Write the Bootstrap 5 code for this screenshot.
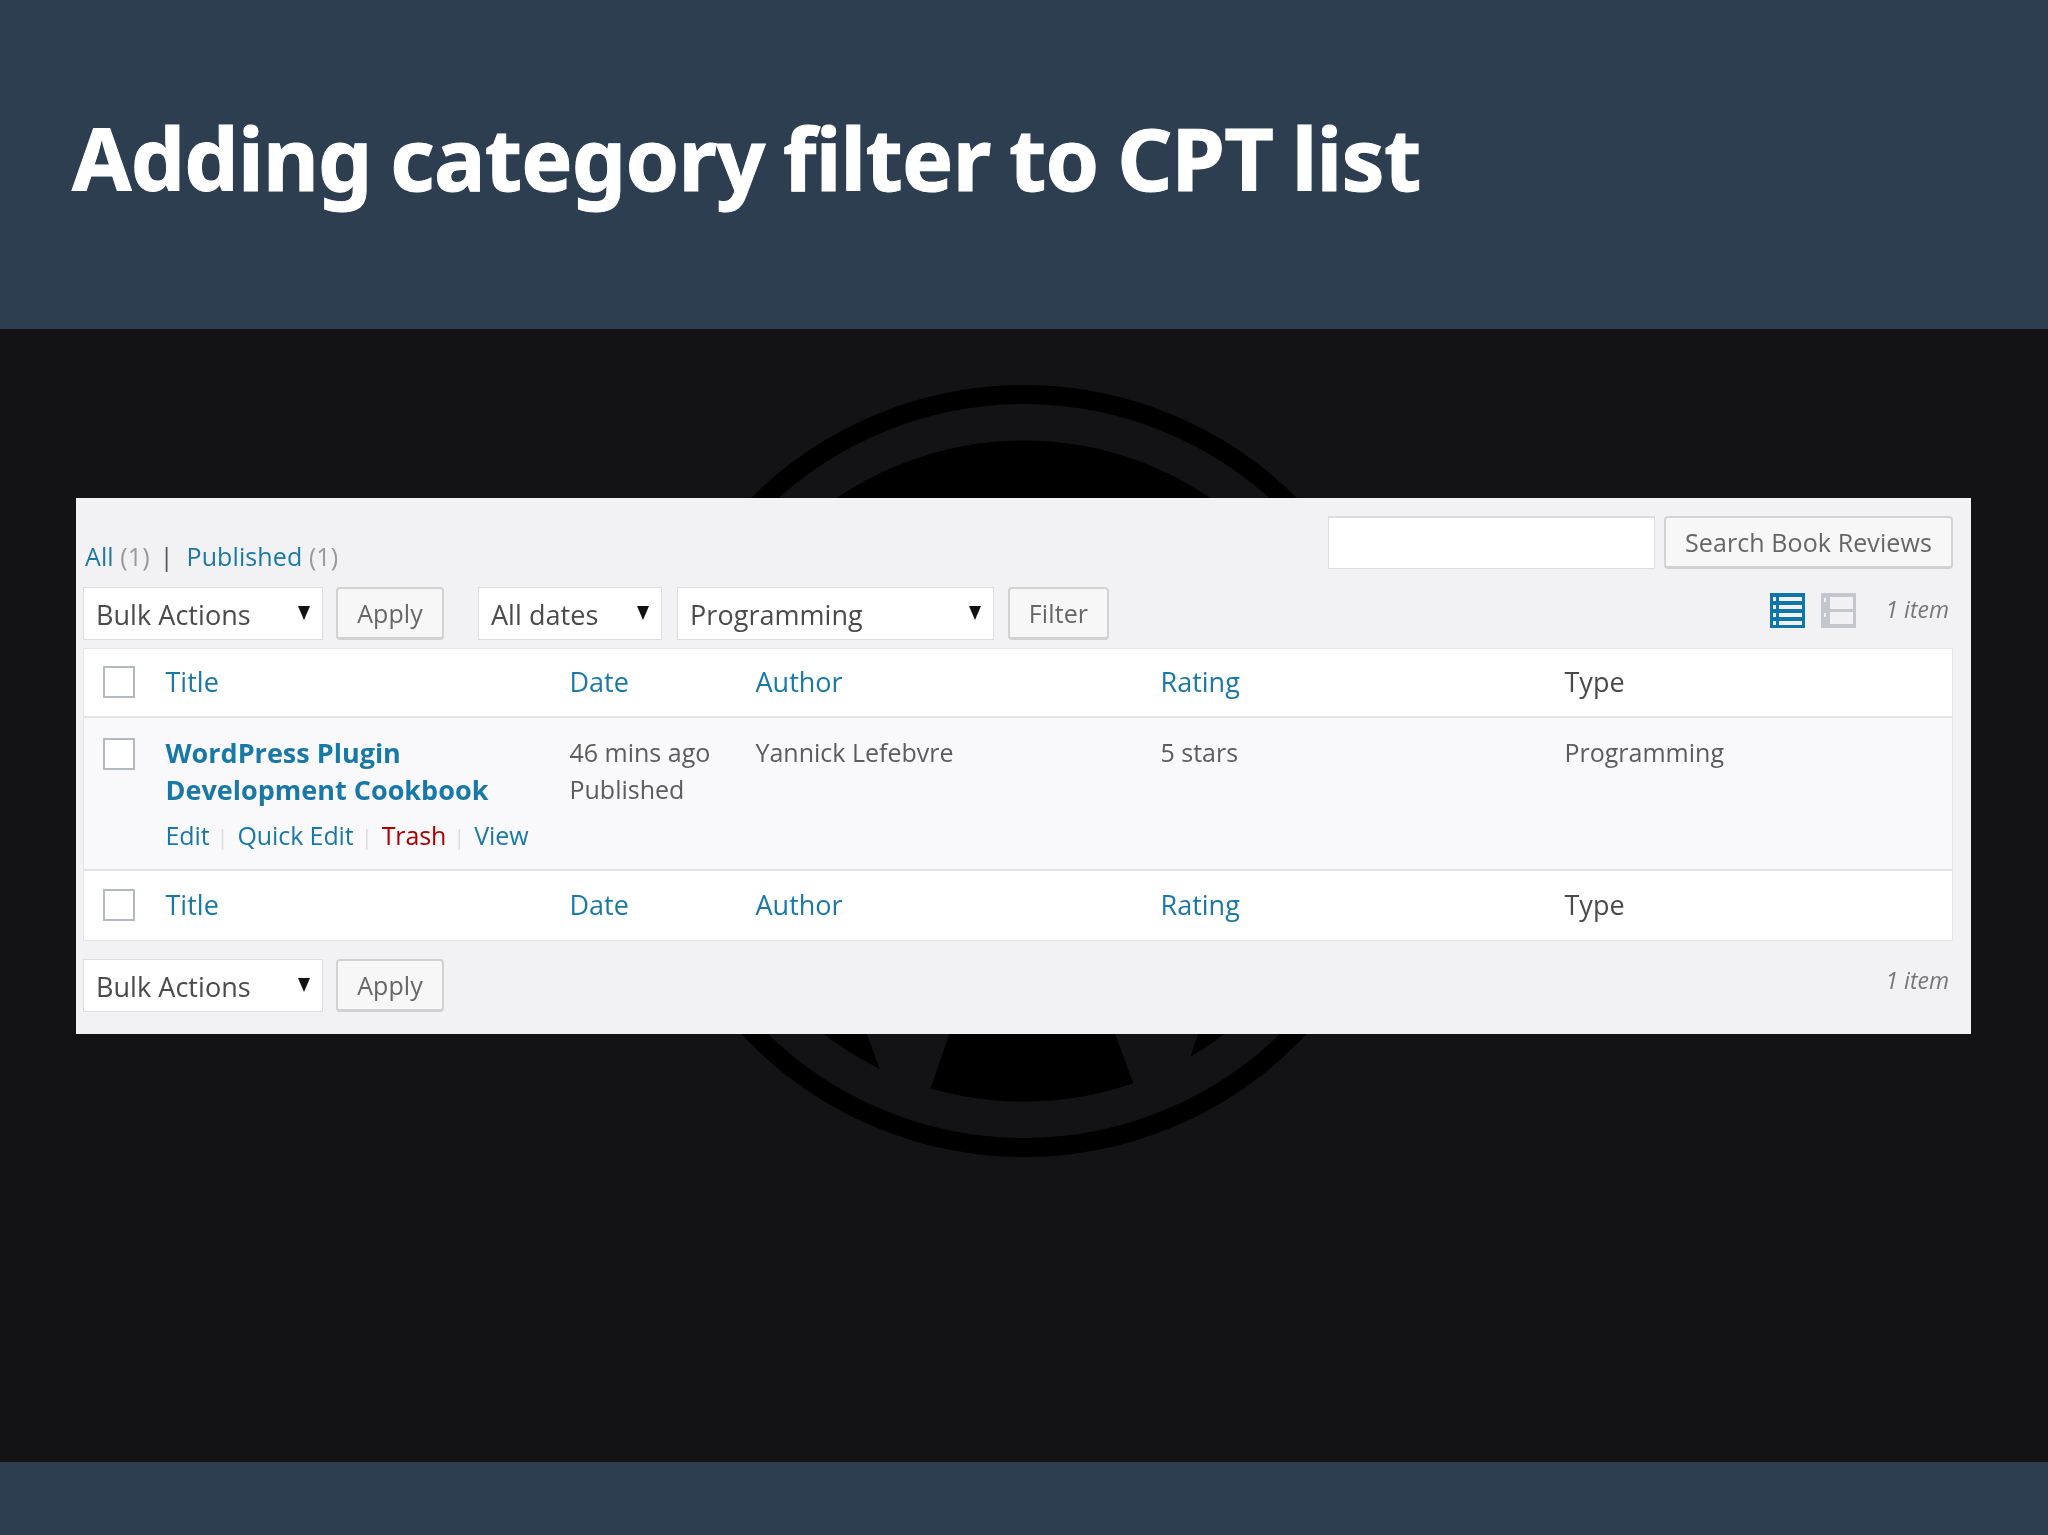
<!DOCTYPE html>
<html lang="en">
<head>
<meta charset="utf-8">
<title>Adding category filter to CPT list</title>
<link href="https://cdn.jsdelivr.net/npm/bootstrap@5.3.0/dist/css/bootstrap.min.css" rel="stylesheet">
<style>
html,body{height:100%;}
body{background:#131316;font-family:"Open Sans","Liberation Sans",sans-serif;color:#555;font-size:26px;}
.slide{height:1535px;overflow:hidden;}
.slide-head{height:329px;background:#2d3e50;padding:0 72px;flex:none;}
.slide-title{font-family:"Noto Sans","Open Sans",sans-serif;font-weight:700;font-size:86px;line-height:1;color:#fff;margin:0;letter-spacing:-.75px;word-spacing:-3px;padding-top:115px;-webkit-text-stroke:1px #fff;}
.slide-body{flex:1 1 auto;padding:169px 77px 0 76px;position:relative;background:#131316;}
.slide-foot{height:73px;background:#2d3e50;flex:none;}
.wp-mark{position:absolute;left:638px;top:56px;width:772px;height:772px;fill:#000;}
.wp-panel{position:relative;background:#f2f1f3;padding:18px 18px 22px 7px;height:536px;filter:blur(.5px);}
.rowline{height:53px;}
.status-links{font-size:25px;line-height:1;margin-left:2px;color:#999;letter-spacing:.1px;}
.status-links a,.wp-link{color:#1a78a6;text-decoration:none;}
.status-links .sep{color:#555;margin:0 13px 0 10px;}
.wp-input{width:327px;height:53px;background:#fff;border:1px solid #ddd;border-top-width:2px;margin-right:9px;border-radius:0;}
.wp-btn{height:53px;background:#f7f7f7;border:2px solid #d2d2d2;border-bottom-width:3px;border-radius:4px;color:#666;font-size:25px;padding:0;line-height:1;letter-spacing:.1px;}
.wp-btn:hover{background:#f7f7f7;color:#666;border-color:#d2d2d2;}
.btn-search{width:289px;}
.btn-apply{width:108px;margin-left:13px;}
.btn-filter{width:101px;margin-left:14px;}
.wp-select{height:53px;border:1px solid #ddd;border-radius:0;background-color:#fff;padding:2px 0 0 12px;font-size:27px;color:#4a4a4a;letter-spacing:.05px;line-height:normal;background-position:right 12px top 18px;background-size:12px 14px;background-image:url("data:image/svg+xml,%3Csvg xmlns='http://www.w3.org/2000/svg' viewBox='0 0 12 14'%3E%3Cpath d='M0 0h12L6 14z' fill='%23111'/%3E%3C/svg%3E");}
.sel-bulk{width:240px;}
.sel-dates{width:184px;margin-left:34px;}
.sel-prog{width:317px;margin-left:15px;}
.toolbar-2{margin-top:18px;height:54px;}
.view-ico{width:35px;height:35px;display:block;}
.view-wrap{margin-top:6px;column-gap:16px;}
.item-count{font-style:italic;font-size:23px;color:#777;margin-left:13px;margin-right:4px;line-height:1;margin-top:5px;}
.item-count-b{margin-top:10px;}
.wp-table{width:1870px;table-layout:fixed;margin:7px 0 0;background:#fff;border-collapse:collapse;border:1px solid #e5e5e5;--bs-table-color:#5c5c5c;--bs-table-bg:transparent;}
.wp-table th,.wp-table td{padding:0;vertical-align:top;font-weight:400;border:0;}
.wp-table thead th,.wp-table tfoot th{font-size:27px;vertical-align:middle;color:#4a4a4a;letter-spacing:0;}
.wp-table thead th{height:68px;padding-bottom:1px;}
.wp-table tfoot th{height:71px;}
.wp-table thead tr{border-bottom:2px solid #e3e3e5;}
.wp-table tfoot tr{border-top:2px solid #e3e3e5;}
.wp-table tbody td{background:#f9f9fb;height:153px;font-size:25px;line-height:37px;padding-top:16px;letter-spacing:0;}
.cb{display:block;width:32px;height:32px;border:2px solid #b4b9be;background:#fff;margin-left:19px;}
.wp-table tbody .cb{margin-top:4px;}
.post-title{font-weight:700;font-size:27px;display:block;width:360px;letter-spacing:0;line-height:37px;}
.row-acts{font-size:25px;margin-top:9px;line-height:37px;white-space:nowrap;letter-spacing:-.1px;}
.row-acts i{font-style:normal;color:#ddd;margin:0 9px 0 7px;font-size:22px;}
.trash{color:#a00;}
.toolbar-3{margin-top:18px;height:53px;}
.toolbar-3 .btn-apply{height:53px;}
</style>
</head>
<body>
<div class="slide d-flex flex-column">
  <header class="slide-head">
    <h1 class="slide-title">Adding category filter to CPT list</h1>
  </header>
  <main class="slide-body">
    <svg class="wp-mark" viewBox="0 0 24 24" aria-hidden="true">
      <path d="M12 0a12 12 0 1 0 0 24a12 12 0 1 0 0-24zm0 .59a11.41 11.41 0 1 1 0 22.82a11.41 11.41 0 1 1 0-22.82z" fill-rule="evenodd"/>
      <g transform="translate(12 12) scale(.953) translate(-12 -12)">
      <path d="M21.469 6.825c.84 1.537 1.318 3.3 1.318 5.175 0 3.979-2.156 7.456-5.363 9.325l3.295-9.527c.615-1.54.82-2.771.82-3.864 0-.405-.026-.78-.07-1.11m-7.981.105c.647-.03 1.232-.105 1.232-.105.582-.075.514-.93-.067-.899 0 0-1.755.135-2.88.135-1.064 0-2.85-.15-2.85-.15-.585-.03-.661.855-.075.885 0 0 .54.061 1.125.09l1.68 4.605-2.37 7.08L5.354 6.9c.649-.03 1.234-.1 1.234-.1.585-.075.516-.93-.065-.896 0 0-1.746.138-2.874.138-.2 0-.438-.008-.69-.015C4.911 3.15 8.235 1.215 12 1.215c2.809 0 5.365 1.072 7.286 2.833-.046-.003-.091-.009-.141-.009-1.06 0-1.812.923-1.812 1.914 0 .89.513 1.643 1.06 2.531.411.72.89 1.643.89 2.977 0 .915-.354 1.994-.821 3.479l-1.075 3.585-3.9-11.61.001.014zM12 22.784c-1.059 0-2.081-.153-3.048-.437l3.237-9.406 3.315 9.087c.024.053.05.101.078.149-1.12.393-2.325.609-3.582.609M1.211 12c0-1.564.336-3.05.935-4.39L7.29 21.709C3.694 19.96 1.212 16.271 1.211 12"/>
      </g>
    </svg>
    <section class="wp-panel">
      <div class="rowline d-flex justify-content-between align-items-end">
        <div class="status-links"><a href="#">All</a> (1)<span class="sep">|</span><a href="#">Published</a> (1)</div>
        <div class="d-flex">
          <input class="wp-input form-control" type="text" aria-label="Search">
          <button class="btn wp-btn btn-search" type="button">Search Book Reviews</button>
        </div>
      </div>
      <div class="toolbar-2 d-flex align-items-start">
        <select class="form-select wp-select sel-bulk"><option>Bulk Actions</option></select>
        <button class="btn wp-btn btn-apply" type="button">Apply</button>
        <select class="form-select wp-select sel-dates"><option>All dates</option></select>
        <select class="form-select wp-select sel-prog"><option>Programming</option></select>
        <button class="btn wp-btn btn-filter" type="button">Filter</button>
        <div class="ms-auto d-flex view-wrap align-items-start">
          <svg class="view-ico" viewBox="0 0 35 35"><rect width="35" height="35" fill="#0f76a8"/><g fill="#f1f1f3"><path d="M3 4h3v4H3zM9 4h23v4H9zM3 12h3v4H3zM9 12h23v4H9zM3 20h3v4H3zM9 20h23v4H9zM3 28h3v4H3zM9 28h23v4H9z"/></g></svg>
          <svg class="view-ico" viewBox="0 0 35 35"><rect width="35" height="35" fill="#c3c6ca"/><g fill="#f1f1f3"><path d="M3 5h2v4H3zM3 20h2v4H3zM9 4h23v12H9zM9 19h23v12H9z"/></g></svg>
          <span class="item-count">1 item</span>
        </div>
      </div>
      <table class="table wp-table">
        <colgroup><col style="width:82px"><col style="width:404px"><col style="width:186px"><col style="width:405px"><col style="width:404px"><col></colgroup>
        <thead><tr>
          <th><span class="cb"></span></th><th><a class="wp-link" href="#">Title</a></th><th><a class="wp-link" href="#">Date</a></th><th><a class="wp-link" href="#">Author</a></th><th><a class="wp-link" href="#">Rating</a></th><th>Type</th>
        </tr></thead>
        <tbody><tr>
          <td><span class="cb"></span></td>
          <td><a class="wp-link post-title" href="#">WordPress Plugin Development Cookbook</a>
            <div class="row-acts"><a class="wp-link" href="#">Edit</a><i>|</i><a class="wp-link" href="#">Quick Edit</a><i>|</i><a class="trash text-decoration-none" href="#">Trash</a><i>|</i><a class="wp-link" href="#">View</a></div></td>
          <td>46 mins ago<br>Published</td>
          <td>Yannick Lefebvre</td>
          <td>5 stars</td>
          <td>Programming</td>
        </tr></tbody>
        <tfoot><tr>
          <th><span class="cb"></span></th><th><a class="wp-link" href="#">Title</a></th><th><a class="wp-link" href="#">Date</a></th><th><a class="wp-link" href="#">Author</a></th><th><a class="wp-link" href="#">Rating</a></th><th>Type</th>
        </tr></tfoot>
      </table>
      <div class="toolbar-3 d-flex align-items-start">
        <select class="form-select wp-select sel-bulk"><option>Bulk Actions</option></select>
        <button class="btn wp-btn btn-apply" type="button">Apply</button>
        <span class="item-count item-count-b ms-auto">1 item</span>
      </div>
    </section>
  </main>
  <footer class="slide-foot"></footer>
</div>
<script src="https://cdn.jsdelivr.net/npm/bootstrap@5.3.0/dist/js/bootstrap.bundle.min.js"></script>
</body>
</html>
